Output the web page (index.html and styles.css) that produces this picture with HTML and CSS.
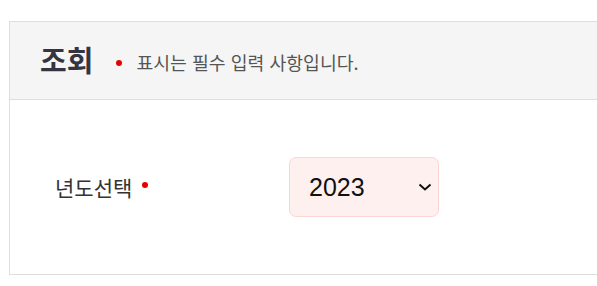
FILE: index.html
```html
<!DOCTYPE html>
<html lang="ko">
<head>
<meta charset="utf-8">
<title>조회</title>
<link rel="stylesheet" href="styles.css">
</head>
<body>
<section class="panel">
  <header class="panel-head">
    <h2 class="panel-title">조회</h2>
    <p class="panel-note"><span class="req-dot"></span>표시는 필수 입력 사항입니다.</p>
  </header>
  <div class="panel-body">
    <label class="field-label" for="year">년도선택<span class="req-dot"></span></label>
    <select class="year-select" id="year">
      <option>2023</option>
      <option>2022</option>
      <option>2021</option>
    </select>
  </div>
</section>
</body>
</html>
```
FILE: styles.css
```css
html, body {
  margin: 0;
  padding: 0;
  background: #fff;
}
body {
  padding: 21px 0 0 9px;
  overflow: hidden;
  font-family: "Noto Sans CJK KR", "Noto Sans", sans-serif;
}
.panel {
  width: 588px;
  border: 1px solid #dedede;
  border-right: 0;
  box-sizing: border-box;
}
.panel-head {
  height: 78px;
  box-sizing: border-box;
  background: #f5f5f5;
  border-bottom: 1px solid #dedede;
  display: flex;
  align-items: center;
  padding-left: 30px;
}
.panel-title {
  margin: -4px 0 0 0;
  font-size: 29px;
  font-weight: 700;
  color: #343442;
}
.panel-note {
  margin: 2px 0 0 23px;
  display: flex;
  align-items: center;
  font-size: 18.3px;
  color: #555;
}
.req-dot {
  display: inline-block;
  width: 6px;
  height: 6px;
  border-radius: 50%;
  background: #e60000;
}
.panel-note .req-dot {
  margin: 2px 14px 0 0;
}
.panel-body {
  height: 174px;
  display: flex;
  align-items: center;
  padding-left: 45px;
}
.field-label {
  width: 234px;
  display: flex;
  align-items: center;
  font-size: 21px;
  color: #333;
}
.field-label .req-dot {
  margin: 0 0 4px 10px;
}
.year-select {
  -webkit-appearance: none;
  appearance: none;
  width: 150px;
  height: 60px;
  box-sizing: border-box;
  padding: 0 30px 0 19px;
  font-family: "Liberation Sans", Arial, sans-serif;
  font-size: 25px;
  color: #111;
  background-color: #fff0f0;
  background-image: url("data:image/svg+xml,%3Csvg xmlns='http://www.w3.org/2000/svg' width='14' height='8' viewBox='0 0 14 8'%3E%3Cpath d='M1.5 1.5 7 6.5 12.5 1.5' fill='none' stroke='%23111' stroke-width='2'/%3E%3C/svg%3E");
  background-repeat: no-repeat;
  background-position: right 6px center;
  border: 1px solid #fdd5d2;
  border-radius: 7px;
  outline: none;
}
```
